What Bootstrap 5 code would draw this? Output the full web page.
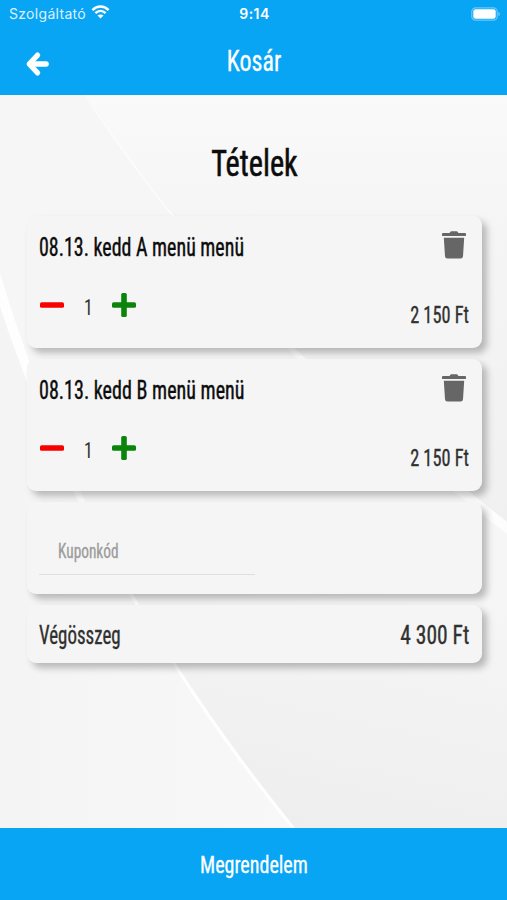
<!DOCTYPE html>
<html lang="hu">
<head>
<meta charset="utf-8">
<meta name="viewport" content="width=device-width, initial-scale=1">
<title>Kosár</title>
<link rel="stylesheet" href="https://cdn.jsdelivr.net/npm/bootstrap@5.3.0/dist/css/bootstrap.min.css">
<style>
  body { font-family: "Roboto Condensed", Roboto, sans-serif; background: #f5f5f5; height: 900px; overflow: hidden; }
  .screen { height: 900px; }
  .brand-bg { background: #08a5f5; color: #fff; }
  .top-area { height: 94.5px; }
  .status { height: 28px; padding: 0 7px 0 9px; font: 400 14px/28px Inter, sans-serif; }
  .status .col { padding: 0; }
  .carrier { letter-spacing: .3px; opacity: .85; }
  .clock { font-weight: 600; letter-spacing: .45px; }
  .titlebar { height: 66px; }
  .title-col { font-size: 29px; line-height: 68px; -webkit-text-stroke: .3px; }
  .side-col { width: 78px; padding: 5px 0 0 25px; }

  /* Narrow display lettering: horizontally condensed text */
  .slim { display: inline-block; white-space: nowrap; transform: scaleX(var(--sx, .8)); transform-origin: center; }
  .slim-start { transform-origin: left center; }
  .slim-end { transform-origin: right center; }

  .content-area { padding: 0 25px 0 27px; }
  .backdrop { left: 0; top: 0; z-index: 0; }
  .content-area > :not(.backdrop) { position: relative; z-index: 1; }
  .page-heading { font-size: 37.5px; line-height: 50px; margin: 43.5px 0 27.5px; font-weight: 400; color: #0c0c0c; -webkit-text-stroke: .6px; --sx: .807; }
  .tile { background: #f5f5f5; border: 0; border-radius: 9px; box-shadow: 5px 5px 7px rgba(0,0,0,.25); margin-bottom: 11px; padding: 0 13px 0 12px; }
  .tile-item { height: 132px; padding-top: 11px; }
  .tile-coupon { height: 92px; padding-top: 29px; }
  .tile-total { height: 58px; font-size: 25px; line-height: 62px; color: #303030; -webkit-text-stroke: .35px; }
  .item-name { font-size: 25px; line-height: 41px; color: #0c0c0c; -webkit-text-stroke: .4px; }
  .item-foot { height: 54px; margin-top: 13px; color: #303030; }
  .qty { height: 48px; gap: 16.5px; }
  .qty-num { font-size: 22px; line-height: 30px; width: 13px; margin-top: 6px; }
  .price { font-size: 23px; line-height: 30px; margin-top: 20.5px; -webkit-text-stroke: .35px; }
  .icon-btn { background: none; border: 0; padding: 0; display: block; }
  .trash-btn { height: 28px; margin-right: 3px; margin-top: 4px; }
  .coupon-field { width: 216px; height: 44px; border-bottom: 1px solid #dfdfdf; padding-left: 19px; font-size: 19.5px; line-height: 42px; color: #9c9c9c; -webkit-text-stroke: .3px; --sx: .788; }
  .order-btn { height: 72px; border: 0; border-radius: 0; font-size: 24.5px; line-height: 74px; padding: 0; -webkit-text-stroke: .3px; --sx: .818; }
</style>
<script src="https://cdn.jsdelivr.net/npm/bootstrap@5.3.0/dist/js/bootstrap.bundle.min.js"></script>
</head>
<body>
<div class="screen d-flex flex-column">
  <header class="top-area brand-bg flex-shrink-0">
    <div class="status d-flex align-items-center">
      <div class="col d-flex align-items-center">
        <span class="carrier">Szolgáltató</span>
        <svg class="ms-1 mb-1" width="20" height="16" viewBox="-.5 0 20 16" fill="none" stroke="#fff" stroke-width="2.500"><path d="M1.900 6.100C6.600 1.400 13.400 1.400 18.100 6.100M4.900 9.200c3-2.900 7.200-2.900 10.200 0"/><path d="M10 14.600l-3-3c1.700-1.500 4.300-1.500 6 0z" fill="#fff" stroke="none"/></svg>
      </div>
      <div class="clock">9:14</div>
      <div class="col d-flex justify-content-end">
        <svg width="29" height="14" viewBox="0 0 29 14"><rect x=".8" y=".8" width="25.400" height="12.400" rx="3.800" fill="none" stroke="#fff" stroke-opacity=".4" stroke-width="1.200"/><rect x="2.300" y="2.300" width="22.400" height="9.400" rx="2.200" fill="#fff"/><path d="M27.400 5v4q1.500-.7 1.500-2t-1.500-2z" fill="#fff" fill-opacity=".45"/></svg>
      </div>
    </div>
    <nav class="titlebar d-flex align-items-center">
      <div class="side-col">
        <button class="icon-btn" aria-label="Vissza">
          <svg width="24" height="26" viewBox="0 0 24 26" fill="none" stroke="#fff" stroke-linejoin="round" stroke-linecap="round"><path d="M12.600 4.100L4.200 13l8.400 8.900" stroke-width="5.200"/><path d="M5.500 13h15.600" stroke-width="5.400"/></svg>
        </button>
      </div>
      <div class="title-col flex-grow-1 text-center"><span class="slim" style="--sx:.826">Kosár</span></div>
      <div class="side-col"></div>
    </nav>
  </header>

  <main class="content-area position-relative flex-grow-1 overflow-hidden">
    <svg class="backdrop position-absolute" width="507" height="734" viewBox="0 94 507 734">
      <defs>
        <linearGradient id="shade" gradientUnits="userSpaceOnUse" x1="0" y1="94" x2="0" y2="530"><stop offset="0" stop-color="#fafafa"/><stop offset=".3" stop-color="#f5f5f5"/><stop offset="1" stop-color="#f0f0f0"/></linearGradient>
        <linearGradient id="low" gradientUnits="userSpaceOnUse" x1="360" y1="560" x2="300" y2="830"><stop offset="0" stop-color="#f6f6f6"/><stop offset=".5" stop-color="#f2f2f2"/><stop offset="1" stop-color="#eeeeee"/></linearGradient>
        <linearGradient id="edge" gradientUnits="userSpaceOnUse" x1="0" y1="0" x2="290" y2="0"><stop offset="0" stop-color="#f4f4f4"/><stop offset="1" stop-color="#f8f8f8"/></linearGradient>
      </defs>
      <rect y="94" width="507" height="734" fill="url(#low)"/>
      <path d="M84 94C115 136 143 178 174 215C220 273 260 315 306 358Q400 435 507 521V94z" fill="url(#shade)"/>
      <path d="M0 300Q80 570 294 828H0z" fill="url(#edge)"/>
      <path d="M84 94C115 136 143 178 174 215C220 273 260 315 306 358Q400 435 507 521V533Q400 450 298 358C250 310 215 270 172 215C140 175 110 133 84 94z" fill="#fdfdfd"/>
      <path d="M0 272C10 305 20 335 30 362C45 402 64 452 84 498C108 553 145 615 180 669Q235 753 296 828H292Q230 752 176 669C139 610 103 555 77 498C55 450 35 404 20 362C12 340 5 322 0 305z" fill="#fefefe"/>
    </svg>

    <h1 class="page-heading text-center"><span class="slim">Tételek</span></h1>

    <section class="card tile tile-item">
      <div class="d-flex justify-content-between">
        <div class="item-name"><span class="slim slim-start" style="--sx:.798">08.13. kedd A menü menü</span></div>
        <button class="icon-btn trash-btn" aria-label="Törlés">
          <svg class="d-block" width="24" height="28" viewBox="0 0 24 28" fill="#666"><path d="M1 1.900h6.500L8.400.7q.3-.4.9-.4h5.400q.6 0 .9.400l.9 1.200H23q1 0 1 1v1.300q0 .9-1 .9H1q-1 0-1-.9V2.900q0-1 1-1zM1.800 6.700h20.400l-1.200 18.500q-.2 2.300-2.400 2.300H5.400q-2.200 0-2.400-2.300z"/></svg>
        </button>
      </div>
      <div class="item-foot d-flex justify-content-between align-items-start">
        <div class="qty d-flex align-items-center">
          <button class="icon-btn" aria-label="Kevesebb"><svg class="d-block" width="26" height="26" viewBox="0 0 26 26"><rect x="1" y="10.200" width="24" height="5.600" rx="1.600" fill="#f90000"/></svg></button>
          <div class="qty-num text-center"><span class="slim">1</span></div>
          <button class="icon-btn" aria-label="Több"><svg class="d-block" width="26" height="26" viewBox="0 0 26 26" fill="#0a840a"><rect x="1" y="10.200" width="24" height="5.600" rx="1.600"/><rect x="10.200" y="1" width="5.600" height="24" rx="1.600"/></svg></button>
        </div>
        <div class="price"><span class="slim slim-end" style="--sx:.795">2 150 Ft</span></div>
      </div>
    </section>

    <section class="card tile tile-item">
      <div class="d-flex justify-content-between">
        <div class="item-name"><span class="slim slim-start" style="--sx:.802">08.13. kedd B menü menü</span></div>
        <button class="icon-btn trash-btn" aria-label="Törlés">
          <svg class="d-block" width="24" height="28" viewBox="0 0 24 28" fill="#666"><path d="M1 1.900h6.500L8.400.7q.3-.4.9-.4h5.400q.6 0 .9.400l.9 1.200H23q1 0 1 1v1.300q0 .9-1 .9H1q-1 0-1-.9V2.900q0-1 1-1zM1.800 6.700h20.400l-1.200 18.500q-.2 2.300-2.400 2.300H5.400q-2.200 0-2.400-2.300z"/></svg>
        </button>
      </div>
      <div class="item-foot d-flex justify-content-between align-items-start">
        <div class="qty d-flex align-items-center">
          <button class="icon-btn" aria-label="Kevesebb"><svg class="d-block" width="26" height="26" viewBox="0 0 26 26"><rect x="1" y="10.200" width="24" height="5.600" rx="1.600" fill="#f90000"/></svg></button>
          <div class="qty-num text-center"><span class="slim">1</span></div>
          <button class="icon-btn" aria-label="Több"><svg class="d-block" width="26" height="26" viewBox="0 0 26 26" fill="#0a840a"><rect x="1" y="10.200" width="24" height="5.600" rx="1.600"/><rect x="10.200" y="1" width="5.600" height="24" rx="1.600"/></svg></button>
        </div>
        <div class="price"><span class="slim slim-end" style="--sx:.795">2 150 Ft</span></div>
      </div>
    </section>

    <section class="card tile tile-coupon">
      <div class="coupon-field"><span class="slim slim-start">Kuponkód</span></div>
    </section>

    <section class="card tile tile-total flex-row justify-content-between">
      <span class="slim slim-start" style="--sx:.758">Végösszeg</span>
      <span class="slim slim-end" style="--sx:.86">4 300 Ft</span>
    </section>
  </main>

  <button class="order-btn brand-bg w-100 flex-shrink-0"><span class="slim">Megrendelem</span></button>
</div>
</body>
</html>
